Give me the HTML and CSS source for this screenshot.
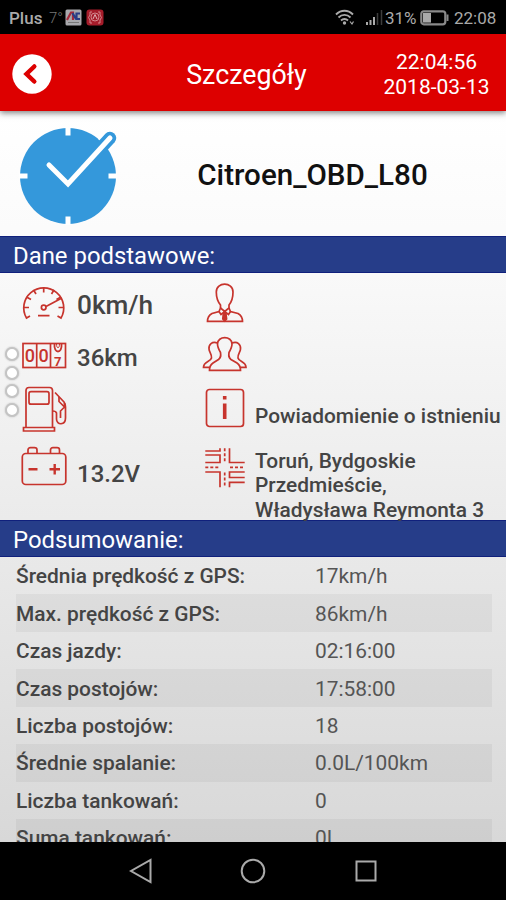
FILE: index.html
```html
<!DOCTYPE html>
<html lang="pl">
  <head>
    <meta charset="UTF-8" />
    <title>Szczegóły</title>
    <link rel="stylesheet" href="styles.css">
  </head>
  <body>
    <div class="status-bar">
      <span class="carrier">Plus</span>
      <span class="temp">7°</span>
      <svg class="app-icon" width="17" height="17" viewBox="0 0 17 17">
        <rect x="0.5" y="0.5" width="16" height="16" rx="1.5" fill="#a9a9ad" />
        <path d="M2 11L6 3.500H8V11" fill="none" stroke="#a52a3a" stroke-width="2.200" />
        <path d="M7.500 4L11 10M15 4.500H11.500V10H15" fill="none" stroke="#293c86" stroke-width="2.200" />
        <path d="M3 13.500H14" stroke="#777" stroke-width="1" />
      </svg>
      <svg class="app-icon" width="18" height="17" viewBox="0 0 18 17">
        <rect x="0.5" y="0.5" width="17" height="16" rx="3" fill="#a51c2a" />
        <path d="M6 3H4V6L2.500 8.500L4 11V14H6M12 3H14V6L15.500 8.500L14 11V14H12" fill="none" stroke="#d2858b" />
        <circle cx="9" cy="8" r="4" fill="none" stroke="#d2858b" />
        <path d="M7 10L9 5.500L11 10" fill="none" stroke="#e0b0b4" />
      </svg>
      <span class="spacer"></span>
      <svg class="wifi" width="20" height="17" viewBox="0 0 20 17" fill="none" stroke="#aaa" stroke-width="1.900">
        <path d="M1 5.500C6 0.500 13 0.500 18 5.500M3.500 8.500C7 5 12 5 15.500 8.500M6 11.500C8 9.500 11 9.500 13 11.500" />
        <circle cx="9.500" cy="14" r="1.700" fill="#aaa" stroke="none" />
        <path d="M15 12.500L17 15L18.500 12.500" stroke-width="1.200" />
      </svg>
      <svg class="signal" width="17" height="17" viewBox="0 0 17 17" stroke-width="2">
        <path d="M1 13V16M4.500 11V16M8 8V16" stroke="#aaa" />
        <path d="M11.500 4V16M15.500 1V16" stroke="#3c3c3c" stroke-width="1.500" />
      </svg>
      <span class="battery-text">31%</span>
      <svg class="battery" width="29" height="16" viewBox="0 0 29 16">
        <rect x="1.300" y="1.300" width="24" height="13" rx="2.500" fill="none" stroke="#8a8a8a" stroke-width="2.200" />
        <rect x="3" y="3" width="8" height="9.600" fill="#aaa" />
        <path d="M27.500 4.500V11" stroke="#8a8a8a" stroke-width="2" />
      </svg>
      <span class="clock">22:08</span>
    </div>

    <header class="header">
      <button class="back">
        <svg width="40" height="40" viewBox="0 0 40 40">
          <circle cx="20" cy="20" r="19.700" fill="#fff" />
          <path d="M22.300 12.500L14.500 20L22.300 27.500" fill="none" stroke="#dd0000" stroke-width="4.500" stroke-linecap="round" />
        </svg>
      </button>
      <h1 class="title">Szczegóły</h1>
      <div class="datetime">22:04:56<br />2018-03-13</div>
    </header>

    <main class="content">
      <div class="vehicle">
        <svg class="vehicle-icon" width="98" height="98" viewBox="0 0 98 98">
          <circle cx="49" cy="49" r="48" fill="#3498db" />
          <path d="M85 17.500L91 11" stroke="#fff" stroke-width="17" />
          <path d="M49 57L91 11" stroke="#3498db" stroke-width="12.500" stroke-linecap="round" />
          <path d="M30 38L49 57L91 11" fill="none" stroke="#fff" stroke-width="5" stroke-linecap="round" />
          <path d="M49 0V8.500M49 89.500V98M0 49H8.500M89.500 49H98" stroke="#fff" stroke-width="5" />
        </svg>
        <h2 class="vehicle-name">Citroen_OBD_L80</h2>
      </div>

      <h3 class="section-title">Dane podstawowe:</h3>
      <div class="details">
        <div class="cell speed">
          <svg class="icon" width="46" height="48" viewBox="0 0 46 48">
            <path d="M9 36L5.500 38A20 20 0 1 1 40 38L36.500 36" />
            <path d="M3 27.500H8M37.500 27.500H42.500M5.500 17L10 19.500M40 17L35.500 19.500M12.500 10L15 14M33 10L30.500 14M22.700 7.500V12.500" />
            <circle cx="22.700" cy="27.500" r="2.300" />
            <path d="M25 26.500L40 18.500M17 35.700H28.500" />
          </svg>
          <span>0km/h</span>
        </div>
        <div class="cell driver">
          <svg class="icon" width="46" height="48" viewBox="0 0 46 48">
            <path d="M18.500 28V25C16 22 14.300 17 14.300 12C14.300 1.500 31 1.500 31 12C31 17 29.500 22 27 25V28" />
            <path d="M18.500 28L17 31.500L10 33.500C6.500 35.500 5.500 37.500 5.500 41.300H40.500C40.500 37.500 39.500 35.500 36 33.500L28.500 31.500L27 28" />
            <path d="M18.500 28L22.700 31.500L27 28M17 31.500L19 34.500L22.700 31.500L26.500 34.500L28.500 31.500" />
            <path d="M22.700 31.500L21.300 34L20.800 39L22.700 41L24.600 39L24 34Z" fill="#c7342d" />
          </svg>
        </div>
        <div class="cell mileage">
          <svg class="icon" width="46" height="48" viewBox="0 0 46 48">
            <rect x="2" y="8.500" width="42.500" height="24" />
            <path d="M15.700 8.500V32.500M29.500 8.500V32.500" />
            <text x="3.700" y="27" class="digit">0</text>
            <text x="17.400" y="27" class="digit">0</text>
            <path d="M33.500 9C32.500 19 41.500 19 40.500 9" stroke-width="1.800" />
            <path d="M35.500 9C35.500 14 38.500 14 38.500 9" stroke-width="1" />
            <text x="33" y="30.500" class="digit digit-small">7</text>
          </svg>
          <span>36km</span>
        </div>
        <div class="cell group">
          <svg class="icon" width="46" height="48" viewBox="0 0 46 48">
            <path d="M18.500 17.500C16.500 14 15.500 12 15.500 9C15.500 0.500 30 0.500 30 9C30 12 29 14 27 17.500C26.500 21 26.500 22.500 29 24.500L35 28C38 30 38.500 32 38.500 35.300H7.500C7.500 32 8 30 11 28L16.500 24.500C19 22.500 19 21 18.500 17.500Z" />
            <path d="M15.500 8C10 6 6.500 9.500 7 14C7 17 10 19 9.500 23C8.500 27 1.500 26.500 1.500 32.300H8" />
            <path d="M30 8C35.500 6 39 9.500 38.500 14C38.500 17 35.500 19 36 23C37 27 44 26.500 44 32.300H38" />
          </svg>
        </div>
        <div class="cell fuel">
          <svg class="icon" width="46" height="48" viewBox="0 0 46 48">
            <path d="M5 42.500V5.500Q5 2.500 8 2.500H28.500Q31.500 2.500 31.500 5.500V42.500M2.500 46V42.500H33.500V46Z" />
            <rect x="8" y="6.700" width="20" height="12.500" rx="2" />
            <path d="M34 7.500L43 17Q44.500 19 44.500 22V33C44.500 40.500 35.500 40.500 35.500 34V28Q35 26 31.500 26" />
            <path d="M38 12V16.500L43.500 22V18M43.500 22L39.500 26V33" />
          </svg>
        </div>
        <div class="cell event">
          <svg class="icon" width="46" height="48" viewBox="0 0 46 48">
            <rect x="4.500" y="4.500" width="37" height="37" rx="3" />
            <path d="M22.700 18.500V34M22.700 11V14.500" stroke-width="3.600" />
          </svg>
          <span>Powiadomienie o istnieniu</span>
        </div>
        <div class="cell voltage">
          <svg class="icon" width="46" height="48" viewBox="0 0 46 48">
            <rect x="1.300" y="9.500" width="43.500" height="31" rx="3.500" />
            <path d="M7 9.500V6Q7 3.700 9.500 3.700H13.500Q16 3.700 16 6V9.500M29.500 9.500V6Q29.500 3.700 32 3.700H36Q38.500 3.700 38.500 6V9.500" />
            <path d="M7.500 25.300H16.500M28.500 25.300H39M33.700 20V30.500" stroke-width="2.400" />
          </svg>
          <span>13.2V</span>
        </div>
        <div class="cell address">
          <svg class="icon" width="46" height="48" viewBox="0 0 46 48">
            <path d="M3.300 18.500H18V11H3.300M3.300 7H18V4.300M27.500 4.300V18.500H42.700M3.300 28H18V43.300M42.700 28H27.500V33.500H42.700M42.700 38.300H27.500V43.300" />
            <path d="M22.700 4.300V18.500M22.700 28.500V43.300M3.300 23.300H18M28 23.300H42.700" stroke-dasharray="3 2" />
          </svg>
          <span>Toruń, Bydgoskie Przedmieście, Władysława Reymonta 3</span>
        </div>
        <div class="dots"><i></i><i></i><i></i><i></i></div>
      </div>

      <h3 class="section-title">Podsumowanie:</h3>
      <dl class="summary">
        <div class="row"><dt>Średnia prędkość z GPS:</dt><dd>17km/h</dd></div>
        <div class="row"><dt>Max. prędkość z GPS:</dt><dd>86km/h</dd></div>
        <div class="row"><dt>Czas jazdy:</dt><dd>02:16:00</dd></div>
        <div class="row"><dt>Czas postojów:</dt><dd>17:58:00</dd></div>
        <div class="row"><dt>Liczba postojów:</dt><dd>18</dd></div>
        <div class="row"><dt>Średnie spalanie:</dt><dd>0.0L/100km</dd></div>
        <div class="row"><dt>Liczba tankowań:</dt><dd>0</dd></div>
        <div class="row"><dt>Suma tankowań:</dt><dd>0L</dd></div>
      </dl>
    </main>

    <nav class="nav-bar">
      <svg width="24" height="26" viewBox="0 0 24 26"><path d="M21.500 2V24L2 13Z" /></svg>
      <svg width="26" height="26" viewBox="0 0 26 26"><circle cx="13" cy="13" r="11.300" /></svg>
      <svg width="24" height="26" viewBox="0 0 24 26"><rect x="2.500" y="3.500" width="19" height="19" /></svg>
    </nav>
  </body>
</html>
```
FILE: styles.css
```css
body {
  margin: 0;
  width: 506px;
  height: 900px;
  display: flex;
  flex-direction: column;
  overflow: hidden;
  background-color: #000;
  font-family: Roboto, sans-serif;
}
svg {
  display: block;
  flex-shrink: 0;
}
h1, h2, h3, dl, dd {
  margin: 0;
  font-weight: 400;
}

/* Android status bar */
.status-bar {
  display: flex;
  align-items: center;
  height: 34px;
  padding: 1px 10px 0 9px;
  box-sizing: border-box;
  color: #aaa;
  font-size: 17px;
}
.carrier {
  width: 40px;
  font-weight: 500;
}
.temp {
  width: 16px;
  color: #777;
  font-size: 15px;
  font-weight: 300;
}
.app-icon {
  margin-right: 4px;
}
.spacer {
  flex: 1;
}
.wifi {
  margin-right: 11px;
}
.signal {
  margin-right: 2px;
}
.battery-text {
  width: 35px;
}
.clock {
  width: 42px;
  margin-left: 5px;
}

.header {
  position: relative;
  z-index: 1;
  display: grid;
  grid-template-columns: 120px 1fr 127px;
  align-items: center;
  height: 77px;
  flex-shrink: 0;
  padding: 0 6px 0 0;
  background-color: #dd0000;
  box-shadow: 0 2px 6px rgba(0, 0, 0, 0.5);
  color: #fff;
}
.back {
  justify-self: start;
  margin: 3px 0 0 12px;
  padding: 0;
  border: 0;
  background: none;
}
.title {
  padding-top: 5px;
  text-align: center;
  font-size: 26.8px;
}
.datetime {
  padding-top: 4px;
  text-align: center;
  font-size: 21px;
  line-height: 24.3px;
}

.content {
  display: flex;
  flex-direction: column;
  height: 731px;
  overflow: hidden;
  background: linear-gradient(#fff 0%, #fafafa 20%, #eaeaea 58%, #d8d8d8 100%);
}
.vehicle {
  display: flex;
  align-items: center;
  height: 125px;
  flex-shrink: 0;
  padding-left: 19px;
}
.vehicle-icon {
  margin-top: 5px;
}
.vehicle-name {
  flex: 1;
  padding: 2px 0 0 2px;
  text-align: center;
  color: #111;
  font-size: 29.6px;
  font-weight: 500;
}
.section-title {
  height: 37px;
  flex-shrink: 0;
  padding: 3px 0 0 13px;
  box-sizing: border-box;
  border-top: 1px solid #10207c;
  border-bottom: 1px solid #10207c;
  background-color: #263d89;
  color: #fff;
  font-size: 23.9px;
  line-height: 32px;
}

.details {
  position: relative;
  display: grid;
  grid-template-columns: 181px 1fr;
  grid-template-rows: 55px 50px 59px 83px;
  height: 247px;
  flex-shrink: 0;
  color: #444;
  font-weight: 500;
}
.cell {
  display: flex;
  padding: 7px 0 0 21px;
}
.cell span {
  margin-left: 10px;
  padding-top: 9px;
  font-size: 24px;
  line-height: 28px;
}
.icon {
  fill: none;
  stroke: #c7342d;
  stroke-width: 1.7;
}
.digit {
  fill: #c7342d;
  stroke: none;
  font-size: 18px;
  font-weight: 500;
}
.digit-small {
  font-size: 13px;
  font-weight: 700;
}
.cell.speed span {
  padding-top: 11px;
  font-size: 26.2px;
}
.cell.voltage span {
  padding-top: 16px;
}
.cell.event span,
.cell.address span {
  margin-left: 7px;
  font-size: 20.9px;
  line-height: 24.3px;
}
.cell.event span {
  padding-top: 19px;
  white-space: nowrap;
}
.cell.address span {
  width: 235px;
  padding-top: 5px;
}
/* page indicator lying over the left edge */
.dots {
  position: absolute;
  top: 74px;
  left: 5px;
  display: grid;
  gap: 4.5px;
}
.dots i {
  width: 10px;
  height: 10px;
  border: 2px solid #c4c4c4;
  border-radius: 50%;
  background-color: #fff;
  box-shadow: 0 0 2px #bbb;
}

.summary {
  padding: 0 14px 0 16px;
}
.row {
  display: flex;
  align-items: center;
  height: 37.45px;
  box-sizing: border-box;
  padding-top: 1px;
  color: #444;
  font-size: 20.9px;
}
.row:nth-child(even) {
  background-color: rgba(0, 0, 0, 0.045);
}
.row dt {
  width: 299px;
  font-weight: 500;
}
.row dd {
  color: #555;
}

/* Android navigation bar */
.nav-bar {
  display: flex;
  justify-content: center;
  align-items: center;
  gap: 87.5px;
  height: 58px;
  fill: none;
  stroke: #aaa;
  stroke-width: 2;
}
```
